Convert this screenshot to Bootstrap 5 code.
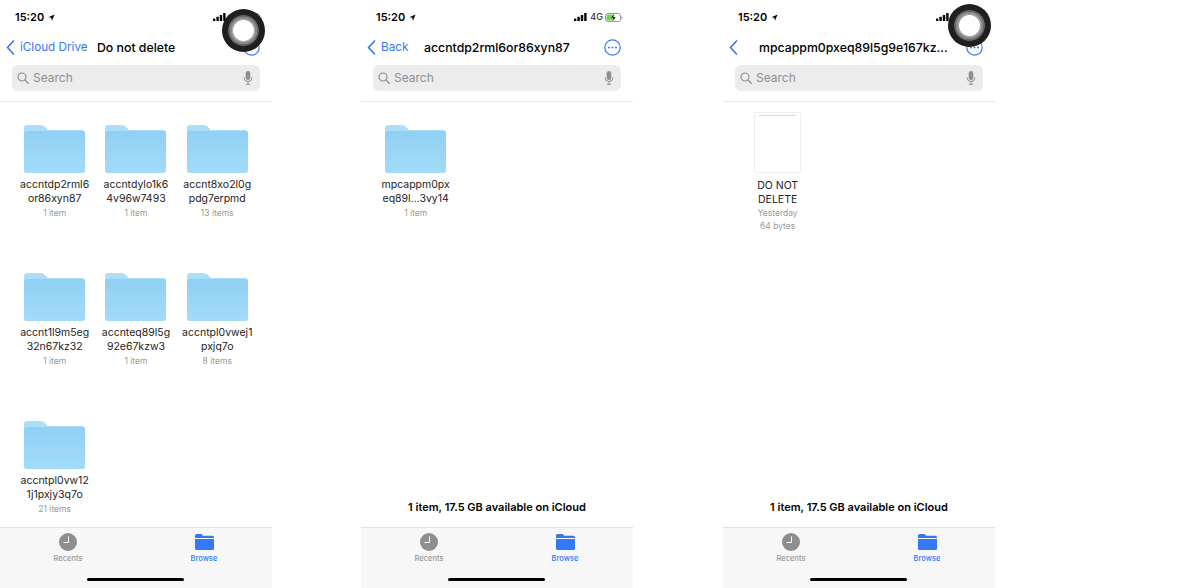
<!DOCTYPE html>
<html lang="en">
<head>
  <meta charset="UTF-8" />
  <meta name="viewport" content="width=device-width, initial-scale=1.0"/>
  <title>iCloud Drive folders</title>
  <link href="https://cdn.jsdelivr.net/npm/bootstrap@5.3.3/dist/css/bootstrap.min.css" rel="stylesheet">
  <style>
    html, body { height: 588px; overflow: hidden; background: #fff; }
    body { font-family: Inter, "Liberation Sans", sans-serif; color: #000; }
    .screens { width: 1200px; height: 588px; }
    .phone { width: 272px; height: 588px; position: relative; flex: none; }
    .phone-b { margin-left: 89px; }
    .phone-c { margin-left: 90px; }
    .status-row { height: 34px; flex: none; padding: 10px 10px 0 15px; font-size: 11px; font-weight: 600; line-height: 14px; }
    .net-label { font-size: 9px; color: #333; margin: 0 2px 0 3px; font-weight: 500; }
    .nav-row { height: 27px; flex: none; padding: 0 15px 0 6px; position: relative; }
    .back-link { color: #3478f6; font-size: 11.7px; gap: 5px; }
    .nav-title { font-size: 12.3px; font-weight: 500; white-space: nowrap; position: absolute; top: 50%; transform: translateY(-50%); }
    .title-a { left: 97px; }
    .title-b { left: 63px; }
    .title-c { left: 36px; }
    .more-btn { position: absolute; right: 12px; top: 5px; }
    .search-box { height: 26px; flex: none; margin: 4px 12px 0; background: #ececec; border-radius: 6px; padding: 0 7px 0 5px; color: #8e8e93; font-size: 12px; gap: 4px; }
    .search-rule { margin-top: 10px; flex: none; border-top: 1px solid #e6e6e6; }
    .file-grid { display: grid; grid-template-columns: repeat(3, 81.3px); grid-auto-rows: 148px; padding: 23px 0 0 14px; flex: 1 1 auto; min-height: 0; }
    .file-cell { text-align: center; }
    .file-name { font-size: 10.5px; line-height: 14px; color: #222; margin-top: 5px; word-break: break-all; padding: 0 5px; }
    .file-meta { font-size: 8.5px; line-height: 14px; color: #999; }
    .doc-thumb { width: 47px; height: 61px; margin: -13px auto 0; border: 1px solid #eee; border-radius: 2px; padding: 2px 4px; }
    .doc-line { height: 1px; background: #dcdcdc; }
    .doc-name { margin-top: 6px; padding: 0 14px; word-break: normal; }
    .doc-meta { line-height: 13px; }
    .space-note { font-size: 11px; font-weight: 600; line-height: 14px; text-align: center; padding-bottom: 13px; flex: none; }
    .tab-bar { height: 61px; background: #f7f7f7; border-top: 1px solid #e2e2e2; position: relative; flex: none; }
    .tab-item { width: 136px; text-align: center; font-size: 7.5px; line-height: 10px; padding-top: 5px; color: #999; font-weight: 500; }
    .tab-item svg { display: block; margin: 0 auto 3px; }
    .tab-on { color: #3478f6; }
    .home-bar { position: absolute; left: 87px; top: 50px; width: 97px; height: 3px; border-radius: 2px; background: #000; }
    .touch-btn { position: absolute; width: 43px; height: 43px; border-radius: 50%; background: radial-gradient(circle, #fff 0 10px, #aaa 10.7px 11.5px, #8a8a8a 12px 13.5px, #666 14px 15px, #222 15.7px, #1c1c1c 21.5px); }
    .touch-a { left: 222px; top: 9px; }
    .touch-c { left: 225px; top: 4px; }
  </style>
</head>
<body>
<svg width="0" height="0" class="position-absolute">
  <defs>
    <linearGradient id="folderGrad" x1="0" y1="0" x2="0" y2="1">
      <stop offset="0" stop-color="#90d0f4"/><stop offset="1" stop-color="#a3dbf9"/>
    </linearGradient>
    <symbol id="folderIcon" viewBox="0 0 61 48">
      <path d="M0 3a3 3 0 0 1 3-3h13c3 0 4 1 6 3l2 2h34a3 3 0 0 1 3 3v37a3 3 0 0 1-3 3H3a3 3 0 0 1-3-3z" fill="#acdefa"/>
      <path d="M0 9a3 3 0 0 1 3-3h55a3 3 0 0 1 3 3v36a3 3 0 0 1-3 3H3a3 3 0 0 1-3-3z" fill="url(#folderGrad)"/>
    </symbol>
    <symbol id="signalIcon" viewBox="0 0 13 8">
      <rect x="0" y="5.5" width="2.4" height="2.5" rx=".5"/><rect x="3.4" y="3.8" width="2.4" height="4.2" rx=".5"/><rect x="6.8" y="2" width="2.4" height="6" rx=".5"/><rect x="10.2" y="0" width="2.4" height="8" rx=".5"/>
    </symbol>
    <symbol id="arrowIcon" viewBox="0 0 8 8"><path d="M7.5.5 .5 3.6l3.3.7.7 3.4z" fill="#000"/></symbol>
    <symbol id="backIcon" viewBox="0 0 9 15"><path d="M7.5 1 1.5 7.5l6 6.5" fill="none" stroke="#3478f6" stroke-width="1.7" stroke-linecap="round" stroke-linejoin="round"/></symbol>
    <symbol id="moreIcon" viewBox="0 0 17 17"><circle cx="8.5" cy="8.5" r="7.7" fill="#fff" stroke="#3478f6" stroke-width="1.2"/><circle cx="5" cy="8.5" r="1" fill="#3478f6"/><circle cx="8.5" cy="8.5" r="1" fill="#3478f6"/><circle cx="12" cy="8.5" r="1" fill="#3478f6"/></symbol>
    <symbol id="lensIcon" viewBox="0 0 13 13"><circle cx="5.4" cy="5.4" r="4.3" fill="none" stroke="#8e8e93" stroke-width="1.2"/><path d="m8.6 8.6 3.6 3.6" stroke="#8e8e93" stroke-width="1.4" stroke-linecap="round"/></symbol>
    <symbol id="micIcon" viewBox="0 0 10 14"><rect x="2.7" y="0" width="4.6" height="9" rx="2.3" fill="#8e8e93"/><path d="M1 6.5a4 4 0 0 0 8 0M5 10.5V13M3 13.3h4" fill="none" stroke="#8e8e93" stroke-width="1"/></symbol>
    <symbol id="clockIcon" viewBox="0 0 18 18"><circle cx="9" cy="9" r="9" fill="#8e8e8e"/><path d="M9.5 3.5v6H4.5" fill="none" stroke="#fff" stroke-width="1"/></symbol>
    <symbol id="browseIcon" viewBox="0 0 19 16"><path d="M0 1.5A1.5 1.5 0 0 1 1.5 0h4c1 0 1.5.4 2 1l.7.8h9.300A1.5 1.5 0 0 1 19 3.300V4H0z" fill="#3478f6"/><path d="M0 5h19v9.500a1.5 1.5 0 0 1-1.5 1.5h-16A1.5 1.5 0 0 1 0 14.500z" fill="#3478f6"/></symbol>
    <symbol id="batteryIcon" viewBox="0 0 18 9"><rect x=".5" y=".5" width="15" height="8" rx="2.5" fill="none" stroke="#999"/><rect x="1.5" y="1.5" width="8" height="6" rx="1.2" fill="#6fd24f"/><path d="M16.5 3v3a1.600 1.600 0 0 0 0-3z" fill="#999"/><path d="M9.5.5 5.5 5h2.500L7 8.500 11 4H8.500z" fill="#000" stroke="#fff" stroke-width=".4"/></symbol>
  </defs>
</svg>

<div class="screens d-flex">

  <!-- First screen: Do not delete -->
  <section class="phone d-flex flex-column">
    <div class="status-row d-flex align-items-start justify-content-between">
      <span class="d-flex align-items-center gap-1">15:20 <svg width="7" height="7"><use href="#arrowIcon"/></svg></span>
      <span class="d-flex align-items-center">
        <svg width="13" height="8"><use href="#signalIcon"/></svg><span class="net-label">4G</span><svg width="18" height="9"><use href="#batteryIcon"/></svg>
      </span>
    </div>
    <div class="nav-row d-flex align-items-center">
      <span class="back-link d-flex align-items-center"><svg width="9" height="15"><use href="#backIcon"/></svg> iCloud Drive</span>
      <span class="nav-title title-a">Do not delete</span>
      <svg class="more-btn" width="17" height="17"><use href="#moreIcon"/></svg>
    </div>
    <div class="search-box d-flex align-items-center">
      <svg width="12" height="12"><use href="#lensIcon"/></svg><span class="flex-grow-1">Search</span><svg width="10" height="14"><use href="#micIcon"/></svg>
    </div>
    <div class="search-rule"></div>
    <div class="file-grid">
      <div class="file-cell"><svg width="61" height="48"><use href="#folderIcon"/></svg><div class="file-name">accntdp2rml6or86xyn87</div><div class="file-meta">1 item</div></div>
      <div class="file-cell"><svg width="61" height="48"><use href="#folderIcon"/></svg><div class="file-name">accntdylo1k64v96w7493</div><div class="file-meta">1 item</div></div>
      <div class="file-cell"><svg width="61" height="48"><use href="#folderIcon"/></svg><div class="file-name">accnt8xo2l0gpdg7erpmd</div><div class="file-meta">13 items</div></div>
      <div class="file-cell"><svg width="61" height="48"><use href="#folderIcon"/></svg><div class="file-name">accnt1l9m5eg32n67kz32</div><div class="file-meta">1 item</div></div>
      <div class="file-cell"><svg width="61" height="48"><use href="#folderIcon"/></svg><div class="file-name">accnteq89l5g92e67kzw3</div><div class="file-meta">1 item</div></div>
      <div class="file-cell"><svg width="61" height="48"><use href="#folderIcon"/></svg><div class="file-name">accntpl0vwej1pxjq7o</div><div class="file-meta">8 items</div></div>
      <div class="file-cell"><svg width="61" height="48"><use href="#folderIcon"/></svg><div class="file-name">accntpl0vw121j1pxjy3q7o</div><div class="file-meta">21 items</div></div>
    </div>
    <div class="tab-bar d-flex">
      <div class="tab-item"><svg width="18" height="18"><use href="#clockIcon"/></svg>Recents</div>
      <div class="tab-item tab-on"><svg width="19" height="18"><use href="#browseIcon"/></svg>Browse</div>
      <div class="home-bar"></div>
    </div>
    <div class="touch-btn touch-a"></div>
  </section>

  <!-- Second screen: inside the first folder -->
  <section class="phone phone-b d-flex flex-column">
    <div class="status-row d-flex align-items-start justify-content-between">
      <span class="d-flex align-items-center gap-1">15:20 <svg width="7" height="7"><use href="#arrowIcon"/></svg></span>
      <span class="d-flex align-items-center">
        <svg width="13" height="8"><use href="#signalIcon"/></svg><span class="net-label">4G</span><svg width="18" height="9"><use href="#batteryIcon"/></svg>
      </span>
    </div>
    <div class="nav-row d-flex align-items-center">
      <span class="back-link d-flex align-items-center"><svg width="9" height="15"><use href="#backIcon"/></svg> Back</span>
      <span class="nav-title title-b">accntdp2rml6or86xyn87</span>
      <svg class="more-btn" width="17" height="17"><use href="#moreIcon"/></svg>
    </div>
    <div class="search-box d-flex align-items-center">
      <svg width="12" height="12"><use href="#lensIcon"/></svg><span class="flex-grow-1">Search</span><svg width="10" height="14"><use href="#micIcon"/></svg>
    </div>
    <div class="search-rule"></div>
    <div class="file-grid">
      <div class="file-cell"><svg width="61" height="48"><use href="#folderIcon"/></svg><div class="file-name">mpcappm0pxeq89l...3vy14</div><div class="file-meta">1 item</div></div>
    </div>
    <div class="space-note">1 item, 17.5 GB available on iCloud</div>
    <div class="tab-bar d-flex">
      <div class="tab-item"><svg width="18" height="18"><use href="#clockIcon"/></svg>Recents</div>
      <div class="tab-item tab-on"><svg width="19" height="18"><use href="#browseIcon"/></svg>Browse</div>
      <div class="home-bar"></div>
    </div>
  </section>

  <!-- Third screen: the file itself -->
  <section class="phone phone-c d-flex flex-column">
    <div class="status-row d-flex align-items-start justify-content-between">
      <span class="d-flex align-items-center gap-1">15:20 <svg width="7" height="7"><use href="#arrowIcon"/></svg></span>
      <span class="d-flex align-items-center">
        <svg width="13" height="8"><use href="#signalIcon"/></svg><span class="net-label">4G</span><svg width="18" height="9"><use href="#batteryIcon"/></svg>
      </span>
    </div>
    <div class="nav-row d-flex align-items-center">
      <span class="back-link d-flex align-items-center"><svg width="9" height="15"><use href="#backIcon"/></svg></span>
      <span class="nav-title title-c">mpcappm0pxeq89l5g9e167kz...</span>
      <svg class="more-btn" width="17" height="17"><use href="#moreIcon"/></svg>
    </div>
    <div class="search-box d-flex align-items-center">
      <svg width="12" height="12"><use href="#lensIcon"/></svg><span class="flex-grow-1">Search</span><svg width="10" height="14"><use href="#micIcon"/></svg>
    </div>
    <div class="search-rule"></div>
    <div class="file-grid">
      <div class="file-cell">
        <div class="doc-thumb"><div class="doc-line"></div></div>
        <div class="file-name doc-name">DO NOT DELETE</div><div class="file-meta doc-meta">Yesterday</div><div class="file-meta doc-meta">64 bytes</div>
      </div>
    </div>
    <div class="space-note">1 item, 17.5 GB available on iCloud</div>
    <div class="tab-bar d-flex">
      <div class="tab-item"><svg width="18" height="18"><use href="#clockIcon"/></svg>Recents</div>
      <div class="tab-item tab-on"><svg width="19" height="18"><use href="#browseIcon"/></svg>Browse</div>
      <div class="home-bar"></div>
    </div>
    <div class="touch-btn touch-c"></div>
  </section>

</div>
<script src="https://cdn.jsdelivr.net/npm/bootstrap@5.3.3/dist/js/bootstrap.bundle.min.js"></script>
</body>
</html>
